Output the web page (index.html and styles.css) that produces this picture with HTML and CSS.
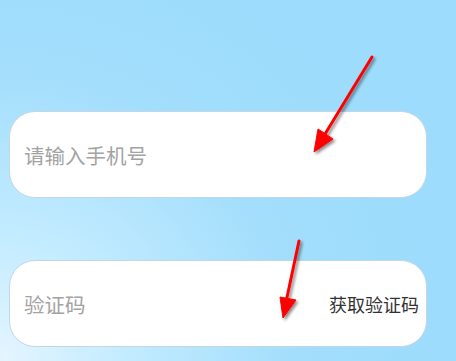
FILE: index.html
```html
<!DOCTYPE html>
<html lang="zh-CN">

	<head>
		<meta charset="UTF-8">
		<meta name="viewport" content="width=device-width, initial-scale=1.0">
		<title>登录</title>
		<link rel="stylesheet" href="styles.css">
	</head>

	<body>
		<div class="form">
			<!-- 手机号 -->
			<div class="field">
				<input class="input" type="text" placeholder="请输入手机号">
			</div>
			<!-- 验证码 -->
			<div class="field">
				<input class="input" type="text" placeholder="验证码">
				<span class="code-btn">获取验证码</span>
			</div>
		</div>

		<!-- 标注箭头 -->
		<svg class="marks" width="456" height="361" viewBox="0 0 456 361">
			<defs>
				<filter id="shadow" x="-50%" y="-50%" width="200%" height="200%">
					<feDropShadow dx="2" dy="2" stdDeviation="1.6" flood-color="#000" flood-opacity="0.45"/>
				</filter>
			</defs>
			<g filter="url(#shadow)" fill="#ff0000" stroke="#ff0000">
				<line x1="372" y1="57" x2="322" y2="139" stroke-width="3" stroke-linecap="round"/>
				<polygon points="314,152 318,129 333,139" stroke-width="1" stroke-linejoin="round"/>
				<line x1="299" y1="241" x2="286" y2="302" stroke-width="3" stroke-linecap="round"/>
				<polygon points="283,318 280,297 296,300" stroke-width="1" stroke-linejoin="round"/>
			</g>
		</svg>
	</body>

</html>
```

FILE: styles.css
```css
html,
body {
	height: 100%;
}

body {
	margin: 0;
	padding: 0;
	overflow: hidden;
	font-family: "Noto Sans CJK SC", "Noto Sans", sans-serif;
	background-color: #9ddcfc;
	background-image: radial-gradient(circle at 0 100%, #e4f5ff 0%, #c2ebff 22%, #a3defc 50%, #9ddcfc 75%);
}

.form {
	display: flex;
	flex-direction: column;
	gap: 62px;
	padding: 111px 29px 0 9px;
}

.field {
	display: flex;
	align-items: center;
	height: 85px;
	padding: 0 7px 0 14px;
	background-color: #fff;
	border: 1px solid #c3d6e6;
	border-radius: 26px;
}

.input {
	flex: 1;
	min-width: 0;
	border: none;
	outline: none;
	background: transparent;
	font-family: inherit;
	font-size: 20.5px;
	color: #333;
	padding: 0;
}

.input::placeholder {
	color: #a3a3a3;
}

.code-btn {
	font-size: 18px;
	color: #333;
	white-space: nowrap;
}

.marks {
	position: absolute;
	top: 0;
	left: 0;
	pointer-events: none;
}
```
